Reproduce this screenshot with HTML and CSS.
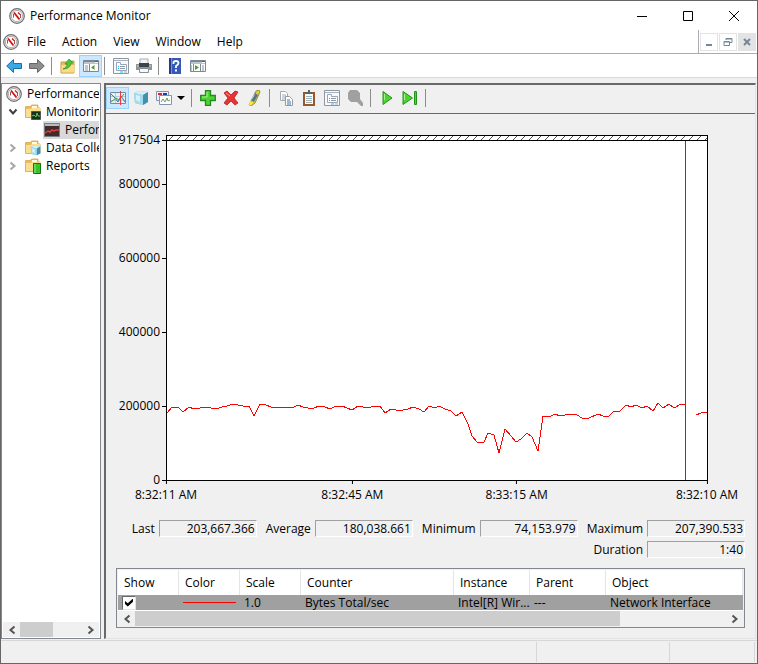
FILE: index.html
```
<!DOCTYPE html>
<html lang="en">
<head>
  <meta charset="UTF-8">
  <meta name="viewport" content="width=device-width, initial-scale=1">
  <title>Performance Monitor</title>
  <link rel="stylesheet" href="styles.css">
</head>
<body>

  <!-- shared icons -->
  <svg class="sprite" aria-hidden="true">
    <symbol id="gauge" viewBox="0 0 16 16">
      <circle cx="8" cy="8" r="7.3" fill="#e8e8e8" stroke="#707070" stroke-width="1.2"/>
      <circle cx="8" cy="8" r="5.6" fill="#fff" stroke="#a0a0a0" stroke-width=".8"/>
      <path d="M4.500 9.500V6M11.500 6v4" fill="none" stroke="#a05050" stroke-width="1"/>
      <path d="M5 4.500l5.500 7" stroke="#d31111" stroke-width="1.800"/>
      <path d="M9 4.500l2 2" stroke="#d31111" stroke-width="1.200"/>
    </symbol>
    <symbol id="folder" viewBox="0 0 16 16">
      <path d="M.5 2.500h5l1-1.500h6.500v3H15V13.500H.5z" fill="#e9bd59" stroke="#d6a94b" stroke-width=".8"/>
      <path d="M7 2h5v2H7z" fill="#fffbe5"/>
      <path d="M1 5h4.500l1.500-1h8v9H1z" fill="#fbdf91"/>
    </symbol>
    <symbol id="cube" viewBox="0 0 16 16">
      <path d="M1 3l4-2 10 1v10l-5 3-8-2z" fill="#79bed6"/>
      <path d="M1 3l4-2 10 1-5 3z" fill="#d5f1f8"/>
      <path d="M1 3l9 2v10l-8-2z" fill="#a5dced"/>
      <path d="M10 5l5-3v10l-5 3z" fill="#428fae"/>
      <path d="M3 5l4 1v6l-4-2z" fill="#d4f2f9"/>
    </symbol>
    <symbol id="sheet" viewBox="0 0 16 16">
      <path d="M.5.5h15v15H.5z" fill="#f7f9fa" stroke="#8b98a4"/>
      <path d="M1 2.500h14" stroke="#a9b2ba"/>
      <path d="M3.500 4.500h4v2h6v6h-10z" fill="#fff" stroke="#9aa5b8"/>
      <path d="M7 8.500h5M7 10.500h5" stroke="#8b98a4"/>
      <path d="M5 8.500h1M5 10.500h1" stroke="#19b4ed"/>
      <path d="M7 14h3" stroke="#18c5f2"/><path d="M11 14h3" stroke="#8bb7c5"/>
    </symbol>
    <symbol id="arrow" viewBox="0 0 16 16">
      <path d="M.7 8L7.500 1.500v4h8v5h-8v4z"/>
    </symbol>
    <symbol id="panes" viewBox="0 0 16 16">
      <path d="M.5 2.500h15v11H.5z" fill="#fff" stroke="#7b8995"/>
      <path d="M1 3.500h11" stroke="#7b8995" stroke-width="2"/>
      <path d="M12 3.500h3" stroke="#536270"/>
      <path d="M1 5.500h14" stroke="#bac4cc"/>
    </symbol>
    <symbol id="chevron" viewBox="0 0 8 10">
      <path d="M1.500 1.500L5.500 5l-4 3.500" fill="none" stroke="currentColor" stroke-width="2"/>
    </symbol>
  </svg>

  <div class="window">
    <header class="titlebar">
      <svg class="icon"><use href="#gauge"/></svg>
      <h1>Performance Monitor</h1>
      <button class="caption" aria-label="Minimize"><svg viewBox="0 0 10 10"><path d="M0 5.500h10"/></svg></button>
      <button class="caption" aria-label="Maximize"><svg viewBox="0 0 10 10"><path d="M.5.5h9v9h-9z"/></svg></button>
      <button class="caption" aria-label="Close"><svg viewBox="0 0 10 10"><path d="M0 0l10 10M10 0L0 10"/></svg></button>
    </header>

    <nav class="menubar">
      <svg class="icon"><use href="#gauge"/></svg>
      <button>File</button>
      <button>Action</button>
      <button>View</button>
      <button>Window</button>
      <button>Help</button>
      <div class="mdi">
        <button aria-label="Minimize console"><svg viewBox="0 0 10 10"><path d="M2 8h6" stroke-width="2"/></svg></button>
        <button aria-label="Restore console"><svg viewBox="0 0 10 10"><path d="M3 3V1.500h6v4H7M3 2h6" /><path d="M1 4.500h5.500v4H1zM1 5h5"/></svg></button>
        <button class="off" aria-label="Close console" disabled><svg viewBox="0 0 10 10"><path d="M2 2l6 6M8 2L2 8" stroke-width="2"/></svg></button>
      </div>
    </nav>

    <div class="toolbar">
      <button class="tool" aria-label="Back"><svg class="icon back"><use href="#arrow"/></svg></button>
      <button class="tool" aria-label="Forward"><svg class="icon forward"><use href="#arrow"/></svg></button>
      <span class="sep"></span>
      <button class="tool" aria-label="Up one level">
        <svg class="icon" viewBox="0 0 16 16">
          <path d="M1 4h6l1-1h6v12H1z" fill="#e4bd60" stroke="#c69b40"/>
          <path d="M1.500 7h13v7.500h-13z" fill="#f9dc8a"/>
          <path d="M3 11c3-1 4-3 4-5H5l4-5 4 4h-2c0 4-4 6-8 6z" fill="#4ec43c" stroke="#2e8e23" stroke-width=".7"/>
        </svg>
      </button>
      <button class="tool on" aria-label="Show or hide console tree">
        <svg class="icon" viewBox="0 0 16 16">
          <use href="#panes"/><path d="M6.500 6v7" stroke="#7b8995"/><path d="M2 8h3M2 10h3M2 12h3" stroke="#82909d"/><path d="M11.500 7v5L8 9.500z" fill="#43a52f"/>
        </svg>
      </button>
      <span class="sep tight"></span>
      <button class="tool" aria-label="Properties"><svg class="icon"><use href="#sheet"/></svg></button>
      <button class="tool" aria-label="Print">
        <svg class="icon" viewBox="0 0 16 16">
          <path d="M4 1h8v5H4z" fill="#f2f4f5" stroke="#a7adb1"/>
          <path d="M0 6h16v6H0z" fill="#8e9598"/><path d="M3 5h10v4H3z" fill="#3d4448"/>
          <path d="M1 8h2M13 8h2" stroke="#d2d6d8"/>
          <path d="M3.500 10.500h9v4h-9z" fill="#f8fbfc" stroke="#858e94"/>
        </svg>
      </button>
      <span class="sep"></span>
      <button class="tool" aria-label="Help">
        <svg class="icon" viewBox="0 0 16 16">
          <path d="M2 0h12v16H2z" fill="#3658b8"/><path d="M2 0h2v16H2z" fill="#253d86"/><path d="M4 0h1v16H4z" fill="#7591df"/>
          <path d="M6.500 6V4.500Q6.500 3 9 3t2.500 2Q11.500 6.500 9 8v2" fill="none" stroke="#fff" stroke-width="1.800"/><path d="M8 11.500h2v2H8z" fill="#fff"/>
        </svg>
      </button>
      <button class="tool" aria-label="Show or hide action pane">
        <svg class="icon" viewBox="0 0 16 16">
          <use href="#panes"/><path d="M3.500 6v7M10.500 6v7" stroke="#7b8995"/><path d="M12 8h2M12 10h2M12 12h2M1 8h1M1 10h1M1 12h1" stroke="#82909d"/><path d="M5 7v5l4-2.500z" fill="#43a52f"/>
        </svg>
      </button>
    </div>

    <main class="content">
      <aside class="tree-pane">
        <ul class="tree">
          <li class="root"><svg class="icon"><use href="#gauge"/></svg><span>Performance</span></li>
          <li>
            <svg class="twist open"><use href="#chevron"/></svg>
            <svg class="icon" viewBox="0 0 16 16"><use href="#folder"/><path d="M6.500 7.500h9v8h-9z" fill="#193020" stroke="#555"/><path d="M7 12l2-1 2 2 1-4 1 3h2" fill="none" stroke="#45d746"/></svg>
            <span>Monitoring Tools</span>
          </li>
          <li class="leaf">
            <a href="#chart"><svg class="icon" viewBox="0 0 16 16"><path d="M.5 1.500h15v13H.5z" fill="#412b2b" stroke="#787f83"/><path d="M1 3h14" stroke="#b4bdc1" stroke-width="2"/><path d="M1 11l3-2 2 1 2-2 2 1 2-1h3" fill="none" stroke="#e63e3e" stroke-width="1.500"/></svg><span>Performance Monitor</span></a>
          </li>
          <li>
            <svg class="twist"><use href="#chevron"/></svg>
            <svg class="icon" viewBox="0 0 16 16"><use href="#folder"/><use href="#cube" x="5" y="5" width="11" height="11"/></svg>
            <span>Data Collector Sets</span>
          </li>
          <li>
            <svg class="twist"><use href="#chevron"/></svg>
            <svg class="icon" viewBox="0 0 16 16"><use href="#folder"/><path d="M8.500 5.500h7v10h-7z" fill="#37c32b" stroke="#157714"/><path d="M10 6v9" stroke="#8df07b"/></svg>
            <span>Reports</span>
          </li>
        </ul>
        <div class="scrollbar">
          <button aria-label="Scroll tree left"><svg class="flip"><use href="#chevron"/></svg></button>
          <div class="track"><div class="thumb thumb-tree"></div></div>
          <button aria-label="Scroll tree right"><svg><use href="#chevron"/></svg></button>
        </div>
      </aside>

      <section class="monitor">
        <div class="toolbar graphbar">
          <button class="tool on" aria-label="View current activity">
            <svg class="icon" viewBox="0 0 16 16"><path d="M.5 2.500h15v11H.5z" fill="#e5f1f5" stroke="#718da6"/><path d="M1 6.500h14M1 10.500h14M5.500 3v10" stroke="#b9cbd6"/><path d="M1 4l4 4 3 4 3-6 4 6" fill="none" stroke="#426fbd"/><path d="M1 12l5-4 3 2 5-6" fill="none" stroke="#38a63b"/><path d="M10.500 1v14" stroke="#f13939"/></svg>
          </button>
          <button class="tool" aria-label="View log data"><svg class="icon"><use href="#cube"/></svg></button>
          <button class="tool" aria-label="Change graph type">
            <svg class="icon" viewBox="0 0 16 16"><path d="M.5 1.500h12v9H.5z" fill="#f1f3fa" stroke="#8492b4"/><path d="M2 3h4v2H2z" fill="#d3273c"/><path d="M7 3h4v2H7z" fill="#233a9e"/><path d="M3.500 5.500h12v9h-12z" fill="#fff" stroke="#8492b4"/><path d="M5 12l2-3 2 3 2-4 1 3 2-1" fill="none" stroke="#60a655"/></svg>
          </button>
          <button class="drop" aria-label="Graph type list"><svg viewBox="0 0 8 4"><path d="M0 0h8L4 4z"/></svg></button>
          <span class="sep"></span>
          <button class="tool" aria-label="Add counter"><svg class="icon" viewBox="0 0 16 16"><path d="M5.500.7h5v4.800h4.800v5h-4.800v4.800h-5v-4.800H.7v-5h4.800z" fill="#50d137" stroke="#208c1a" stroke-width="1.300"/><path d="M7 2v5H2" fill="none" stroke="#a9f38d"/></svg></button>
          <button class="tool" aria-label="Delete counter"><svg class="icon" viewBox="0 0 16 16"><path d="M1 3l3-2 4 4 4-4 3 1-4 6 4 5-3 2-4-4-4 4-3-2 4-5z" fill="#e53532" stroke="#b61d20" stroke-width=".8"/><path d="M3 3l4 3" stroke="#ff9b8d"/></svg></button>
          <button class="tool" aria-label="Highlight"><svg class="icon" viewBox="0 0 16 16"><path d="M10 1l3-1 1 2-5 11-4 3-2-1z" fill="#e1cf3c" stroke="#83782a" stroke-width=".8"/><path d="M9 3l3 2-4 7-3-2z" fill="#537785"/><path d="M8.500 4.500l-3 5" stroke="#c3dce3"/><path d="M4 11l3 2-3 3-1-1z" fill="#ffe935"/></svg></button>
          <span class="sep"></span>
          <button class="tool" aria-label="Copy properties"><svg class="icon" viewBox="0 0 16 16"><path d="M2.500 1.500h5l2 2v7h-7z" fill="#fff" stroke="#aaa"/><path d="M4 5h4M4 7h4M4 9h4" stroke="#8cabc9"/><path d="M7.500 6.500h4l3 3v6h-7z" fill="#fff" stroke="#999"/><path d="M9 10h3M9 12h4M9 14h4" stroke="#3b70a8"/></svg></button>
          <button class="tool" aria-label="Paste counter list"><svg class="icon" viewBox="0 0 16 16"><path d="M2 2h12v14H2z" fill="#9a592a"/><path d="M4 4h8v10H4z" fill="#f8fbfc"/><path d="M5 6.500h6M5 8.500h6M5 10.500h6M5 12.500h6" stroke="#9aafba"/><path d="M5 2h2V0h2v2h2v2H5z" fill="#5b6264"/></svg></button>
          <button class="tool" aria-label="Graph properties"><svg class="icon"><use href="#sheet"/></svg></button>
          <button class="tool" aria-label="Zoom" disabled><svg class="icon" viewBox="0 0 16 16"><path d="M3 0h7l3 3v6l3 4v3h-2l-4-4H4L1 9V3z" fill="#a0a0a0"/></svg></button>
          <span class="sep"></span>
          <button class="tool" aria-label="Unfreeze display"><svg class="icon" viewBox="0 0 16 16"><path d="M4 1.500l9 6.500-9 6.500z" fill="#4bd331" stroke="#24931b"/><path d="M5.500 4v6" stroke="#a4f18d"/></svg></button>
          <button class="tool" aria-label="Update data"><svg class="icon" viewBox="0 0 16 16"><path d="M1 1.500L10.500 8 1 14.500z" fill="#4bd331" stroke="#24931b"/><path d="M2.500 4v6" stroke="#a4f18d"/><path d="M12.500 1.500h2v13h-2z" fill="#4bd331" stroke="#24931b"/></svg></button>
          <span class="sep"></span>
        </div>

        <div class="chart" id="chart">
          <div class="y-axis">
            <span>917504</span>
            <span>800000</span>
            <span>600000</span>
            <span>400000</span>
            <span>200000</span>
            <span>0</span>
          </div>
          <div class="plot">
            <svg class="hatch" aria-hidden="true">
              <defs><pattern id="stripes" width="8" height="4" patternUnits="userSpaceOnUse"><path d="M2 4l4-4" stroke="#555"/></pattern></defs>
              <rect width="100%" height="4" fill="url(#stripes)"/>
            </svg>
            <svg class="trace" viewBox="0 0 540 339" preserveAspectRatio="none" role="img" aria-label="Bytes Total/sec">
              <polyline points="0,272 5,266 11,266 16,271 22,266 27,268 33,267 38,266 49,268 55,266 60,265 66,263 71,264 76,265 82,265 87,275 93,263 99,264 104,266 110,267 115,266 121,266 125,267 131,264 136,266 141,267 147,267 152,265 158,266 163,268 169,265 175,265 180,267 185,269 191,265 201,267 207,265 213,265 218,272 224,268 229,269 236,269 241,268 246,266 252,268 257,271 262,265 268,267 272,265 278,268 284,270 289,275 295,271 301,283 305,295 310,301 317,301 321,292 327,294 332,312 338,288 344,295 349,301 354,298 360,292 365,296 371,310 376,275 382,276 388,273 393,275 404,273 410,274 415,277 420,278 431,273 436,275 442,275 447,270 453,270 459,264 464,266 469,264 475,267 480,265 486,270 491,262 496,267 502,263 507,267 514,263 518,264"/>
              <polyline points="529,274 534,272 540,271"/>
              <path d="M518.500 0v339"/>
            </svg>
          </div>
          <div class="x-axis">
            <span>8:32:11 AM</span>
            <span>8:32:45 AM</span>
            <span>8:33:15 AM</span>
            <span>8:32:10 AM</span>
          </div>
        </div>

        <div class="stats">
          <div class="stat"><label for="last">Last</label><input id="last" value="203,667.366" readonly></div>
          <div class="stat"><label for="avg">Average</label><input id="avg" value="180,038.661" readonly></div>
          <div class="stat"><label for="min">Minimum</label><input id="min" value="74,153.979" readonly></div>
          <div class="stat"><label for="max">Maximum</label><input id="max" value="207,390.533" readonly></div>
          <div class="stat duration"><label for="dur">Duration</label><input id="dur" value="1:40" readonly></div>
        </div>

        <div class="legend">
          <table>
            <colgroup>
              <col class="c-small"><col class="c-small"><col class="c-small"><col class="c-counter"><col class="c-mid"><col class="c-mid"><col>
            </colgroup>
            <thead>
              <tr><th>Show</th><th>Color</th><th>Scale</th><th>Counter</th><th>Instance</th><th>Parent</th><th>Object</th></tr>
            </thead>
            <tbody>
              <tr>
                <td><input type="checkbox" aria-label="Show Bytes Total/sec" checked></td>
                <td><span class="swatch"></span></td>
                <td>1.0</td>
                <td>Bytes Total/sec</td>
                <td>Intel[R] Wir...</td>
                <td>---</td>
                <td>Network Interface</td>
              </tr>
            </tbody>
          </table>
          <div class="scrollbar">
            <button aria-label="Scroll list left"><svg class="flip"><use href="#chevron"/></svg></button>
            <div class="track"><div class="thumb thumb-list"></div></div>
            <button aria-label="Scroll list right"><svg><use href="#chevron"/></svg></button>
          </div>
        </div>
      </section>
    </main>

    <footer class="statusbar"><span></span><span></span><span></span></footer>
  </div>

</body>
</html>
```
FILE: styles.css
```
* {
  box-sizing: border-box;
}

body {
  margin: 0;
  font: 12px/16px "Open Sans", "Noto Sans", sans-serif;
  color: #000;
}

button,
input {
  font: inherit;
  color: inherit;
  border: 0;
  margin: 0;
  padding: 0;
  background: none;
}

svg {
  display: block;
  flex: none;
}

.sprite {
  position: absolute;
  width: 0;
  height: 0;
}

.icon {
  width: 16px;
  height: 16px;
}

.window {
  display: flex;
  flex-direction: column;
  min-height: 100vh;
  border: 1px solid #666;
  background: #f0f0f0;
}

/* title bar */
.titlebar {
  display: flex;
  align-items: center;
  height: 29px;
  padding-left: 8px;
  background: #fff;
}

.titlebar h1 {
  flex: 1;
  margin: 0 0 0 5px;
  font-size: 12px;
  font-weight: normal;
}

.caption {
  display: flex;
  align-items: center;
  justify-content: center;
  width: 46px;
  height: 29px;
}

.caption svg {
  width: 10px;
  height: 10px;
  fill: none;
  stroke: #000;
  overflow: visible;
}

/* menu */
.menubar {
  display: flex;
  align-items: center;
  height: 24px;
  padding-left: 2px;
  background: #fff;
  border-bottom: 1px solid #a9acb3;
}

.menubar > button {
  padding: 0 8px;
}

.mdi {
  display: flex;
  align-self: stretch;
  align-items: center;
  gap: 1px;
  margin-left: auto;
  padding: 0 1px;
  border-left: 1px solid #a9acb3;
}

.mdi button {
  display: flex;
  align-items: center;
  justify-content: center;
  width: 18px;
  height: 18px;
  border: 1px solid #e3e3e3;
}

.mdi svg {
  width: 10px;
  height: 10px;
  fill: none;
  stroke: #74879a;
}

.mdi .off {
  background: #e3e3e3;
}

/* toolbars */
.toolbar {
  display: flex;
  align-items: center;
  height: 24px;
  padding: 1px 0 0 1px;
  background: #fff;
  border-bottom: 1px solid #dadada;
}

.tool {
  display: flex;
  align-items: center;
  justify-content: center;
  width: 23px;
  height: 22px;
}

.tool.on {
  background: #cce8ff;
  border: 1px solid #99d1ff;
}

.sep {
  width: 1px;
  height: 18px;
  margin: 0 4px 0 3px;
  background: #8c8c8c;
}

.sep.tight {
  margin-left: 2px;
}

.back {
  fill: #38a9e4;
  stroke: #1b70a8;
}

.forward {
  fill: #8d8d8d;
  stroke: #666;
  transform: scaleX(-1);
}

.drop {
  display: flex;
  align-items: center;
  justify-content: center;
  width: 12px;
  height: 22px;
}

.drop svg {
  width: 8px;
  height: 4px;
}

/* tree */
.content {
  display: flex;
  flex: 1;
  gap: 3px;
  padding: 5px 1px 0 0;
}

.tree-pane {
  display: flex;
  flex-direction: column;
  flex: none;
  width: 100px;
  padding: 1px;
  background: #fff;
  border: 1px solid #828790;
}

.tree {
  flex: 1;
  margin: 0;
  padding: 0;
  list-style: none;
  overflow: hidden;
}

.tree li {
  display: flex;
  align-items: center;
  gap: 5px;
  height: 18px;
  padding-left: 6px;
  white-space: nowrap;
}

.tree .root {
  padding-left: 3px;
}

.tree .leaf {
  padding-left: 40px;
}

.tree a {
  display: flex;
  align-items: center;
  gap: 5px;
  height: 18px;
  padding-left: 1px;
  color: inherit;
  text-decoration: none;
  background: #d9d9d9;
}

.twist {
  width: 8px;
  height: 10px;
  margin-right: 3px;
  color: #a6a6a6;
}

.twist.open {
  color: #404040;
  transform: rotate(90deg);
}

.scrollbar {
  display: flex;
  height: 15px;
  background: #f0f0f0;
}

.scrollbar button {
  display: flex;
  align-items: center;
  justify-content: center;
  width: 17px;
  color: #555;
}

.scrollbar svg {
  width: 8px;
  height: 10px;
}

.flip {
  transform: scaleX(-1);
}

.track {
  flex: 1;
}

.thumb {
  height: 100%;
  background: #cdcdcd;
}

.thumb-tree {
  width: 53%;
}

.thumb-list {
  width: 82%;
}

/* monitor pane */
.monitor {
  display: flex;
  flex-direction: column;
  flex: 1;
  min-width: 0;
  border-top: 2px solid #696969;
  border-left: 2px solid #696969;
  border-right: 1px solid #e3e3e3;
  border-bottom: 1px solid #e3e3e3;
}

.graphbar {
  height: 29px;
  padding: 0 0 3px;
  background: #f0f0f0;
  border-color: #696969;
}

.graphbar .sep {
  margin: 0 4px;
}

.chart {
  display: grid;
  flex: 1;
  grid-template-columns: 60px 1fr;
  grid-template-rows: 1fr 24px;
  padding: 21px 47px 0 0;
}

.plot {
  display: flex;
  flex-direction: column;
  border: 1px solid #000;
  background: #fff;
}

.hatch {
  width: 100%;
  height: 5px;
  border-bottom: 1px solid #000;
}

.trace {
  flex: 1 1 0;
  width: 100%;
  min-height: 0;
  fill: none;
  stroke: #f00;
  shape-rendering: crispEdges;
}

.trace * {
  vector-effect: non-scaling-stroke;
}

/* the first step (917504 to 800000) is shorter than the others */
.y-axis {
  display: grid;
  grid-template-rows: 44fr 74fr 74fr 74fr 74fr 1px;
  padding-top: 5px;
}

.y-axis span {
  display: flex;
  align-items: center;
  justify-content: flex-end;
  gap: 2px;
  height: 16px;
  margin-top: -8px;
}

.y-axis span::after {
  content: "";
  width: 4px;
  height: 1px;
  background: #000;
}

.x-axis {
  display: grid;
  grid-column: 2;
  grid-template-columns: 186fr 164fr 190fr 1px;
}

.x-axis span {
  display: flex;
  flex-direction: column;
  align-items: center;
  gap: 3px;
  justify-self: start;
  white-space: nowrap;
  transform: translateX(-50%);
}

.x-axis span::before {
  content: "";
  width: 1px;
  height: 3px;
  background: #000;
}

.stats {
  display: grid;
  grid-template-columns: repeat(4, auto);
  justify-content: end;
  gap: 4px 9px;
  padding: 15px 10px 10px 0;
}

.stat {
  display: flex;
  align-items: center;
  justify-content: flex-end;
  gap: 4px;
}

.stat input {
  width: 98px;
  height: 17px;
  padding-right: 1px;
  text-align: right;
  border: 1px solid;
  border-color: #a0a0a0 #fff #fff #a0a0a0;
}

.duration {
  grid-column: 4;
}

/* counter list */
.legend {
  margin: 0 10px 10px;
  padding: 1px;
  border: 1px solid #828790;
}

.legend table {
  width: 100%;
  table-layout: fixed;
  border-collapse: separate;
  border-spacing: 0;
}

.c-small {
  width: 61px;
}

.c-counter {
  width: 153px;
}

.c-mid {
  width: 76px;
}

.legend th {
  height: 25px;
  padding: 0 0 0 6px;
  font-weight: normal;
  text-align: left;
  background: #fff;
  border-right: 1px solid #e5e5e5;
}

.legend td {
  height: 16px;
  padding: 0 0 0 4px;
  line-height: 15px;
  white-space: nowrap;
  background: #a0a0a0;
  border-bottom: 1px solid #fff;
}

.legend input {
  display: block;
  width: 14px;
  height: 14px;
  appearance: none;
  background: #fff;
  border: 1px solid;
  border-color: #696969 #e3e3e3 #e3e3e3 #696969;
}

.legend input:checked::before {
  content: "";
  display: block;
  width: 8px;
  height: 8px;
  margin: 2px;
  background: #000;
  clip-path: polygon(0 30%, 35% 60%, 100% 0, 100% 40%, 35% 100%, 0 70%);
}

.swatch {
  display: block;
  width: 53px;
  height: 1px;
  background: #f00;
}

/* status bar */
.statusbar {
  display: flex;
  height: 23px;
  margin-top: 1px;
  padding: 1px 2px 1px 0;
  border-top: 1px solid #d7d7d7;
}

.statusbar span {
  width: 85px;
  border-right: 1px solid #d7d7d7;
}

.statusbar span:first-child {
  flex: 1;
}

.statusbar span:nth-child(2) {
  width: 133px;
}
```
